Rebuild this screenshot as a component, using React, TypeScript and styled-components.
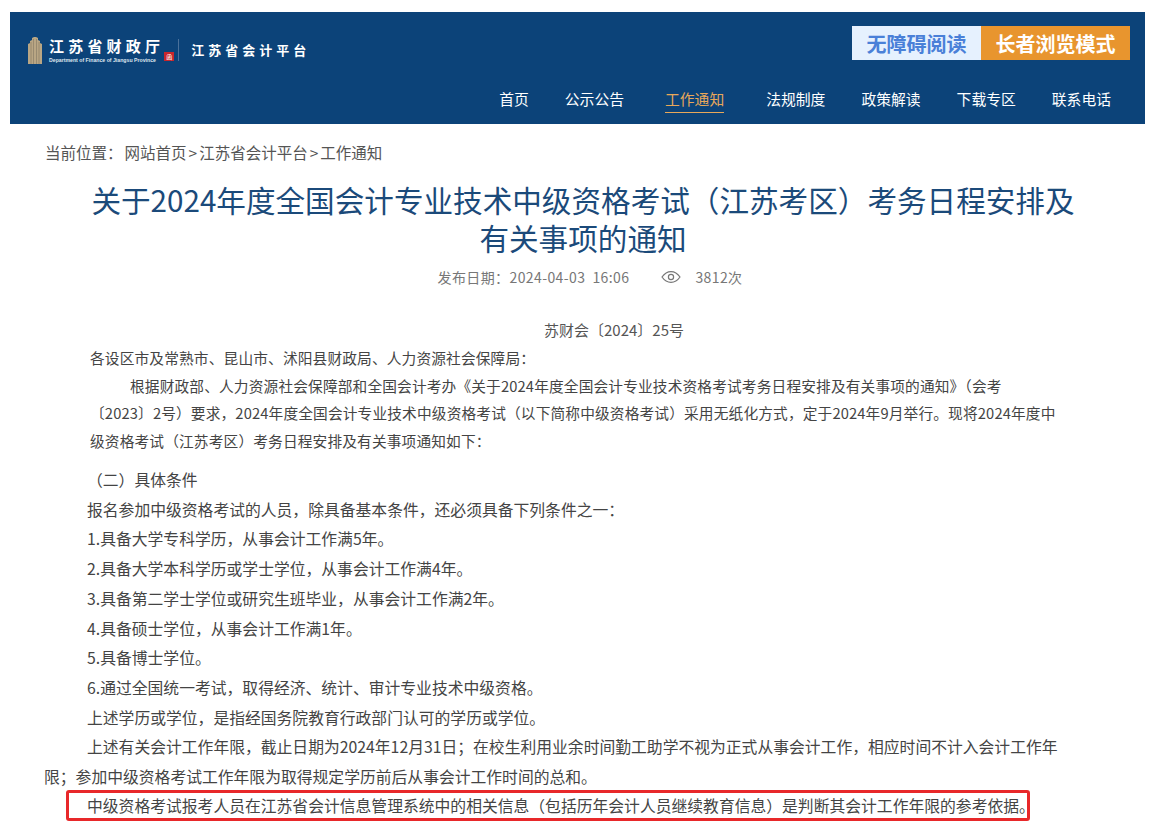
import styled, { createGlobalStyle } from "styled-components";

const GlobalStyle = createGlobalStyle`
  html, body {
    margin: 0;
    padding: 0;
    background: #fff;
  }
  body {
    font-family: "Noto Sans CJK SC", "Liberation Sans", sans-serif;
    color: #444;
    overflow: hidden;
  }
`;

const Page = styled.div`
  padding: 12px 10px 0;
`;

const Header = styled.header`
  height: 112px;
  background: #0c4379;
  display: flex;
  flex-direction: column;
  justify-content: space-between;
`;

const TopRow = styled.div`
  display: flex;
  justify-content: space-between;
  padding: 14px 15px 0 17px;
`;

const Logo = styled.div`
  display: flex;
  align-items: center;
  height: 47px;
`;

const LogoText = styled.div`
  display: flex;
  flex-direction: column;
  margin-left: 6px;
  color: #fff;
`;

const BrandName = styled.div`
  font-size: 15px;
  font-weight: 700;
  letter-spacing: 4.2px;
  line-height: 18px;
`;

const BrandEn = styled.div`
  font-family: "Liberation Sans", sans-serif;
  font-size: 5.2px;
  line-height: 6px;
  margin-top: 2px;
  font-weight: 700;
  white-space: nowrap;
  color: #dfe6ee;
`;

const Seal = styled.div`
  width: 10px;
  height: 9px;
  margin: 14px 0 0 0;
  background: #c8262c;
  color: #fff;
  font-size: 6px;
  line-height: 9px;
  text-align: center;
`;

const LogoDivider = styled.div`
  width: 1px;
  height: 22px;
  margin: 0 12px 0 4px;
  background: #4a719b;
`;

const PlatformName = styled.div`
  color: #fff;
  font-size: 13px;
  font-weight: 700;
  letter-spacing: 4px;
`;

const ModeButtons = styled.div`
  display: flex;
  height: 34px;
`;

const ModeButton = styled.a<{ $elder?: boolean }>`
  display: flex;
  align-items: center;
  justify-content: center;
  font-size: 20px;
  font-weight: 700;
  width: ${(p) => (p.$elder ? "149px" : "129px")};
  background: ${(p) => (p.$elder ? "#e8952e" : "#e6f1fe")};
  color: ${(p) => (p.$elder ? "#fff" : "#4a80d8")};
`;

const Nav = styled.nav`
  display: flex;
  justify-content: flex-end;
  gap: 36px;
  padding: 0 34px 0 0;
  height: 39px;
`;

const NavItem = styled.a<{ $active?: boolean }>`
  font-size: 14.8px;
  line-height: 27px;
  height: 27px;
  white-space: nowrap;
  color: ${(p) => (p.$active ? "#e8a85a" : "#fff")};
  margin: ${(p) => (p.$active ? "0 6px 0 5px" : "0")};
  border-bottom: ${(p) => (p.$active ? "1px solid #e8a85a" : "none")};
`;

const Main = styled.main`
  padding: 0 34px;
`;

const Crumb = styled.div`
  margin-top: 18px;
  padding-left: 1px;
  line-height: 20px;
  font-size: 15.5px;
  color: #555;
`;

const CrumbLabel = styled.span`
  margin-right: 2px;
`;

const CrumbSep = styled.span`
  margin: 0 2px;
`;

const Title = styled.h1`
  margin: 19px 0 0;
  padding: 0 30px 0 41px;
  font-size: 29.6px;
  font-weight: 400;
  line-height: 38px;
  text-align: center;
  color: #1b4a7a;
`;

const Meta = styled.div`
  display: flex;
  justify-content: center;
  align-items: center;
  margin-top: 9px;
  padding-left: 25px;
  height: 22px;
  font-size: 14px;
  letter-spacing: 0.4px;
  color: #777;
`;

const EyeIcon = styled.svg`
  width: 20px;
  height: 16px;
  margin: 0 14px 0 32px;
`;

const DocNo = styled.div`
  margin-top: 31px;
  text-align: center;
  font-size: 15px;
  line-height: 22px;
  color: #555;
  padding-left: 73px;
`;

const Notice = styled.div`
  margin-top: 3px;
  padding-left: 46px;
  padding-right: 40px;
  font-size: 14.7px;
  letter-spacing: 0.15px;
  line-height: 27.5px;
`;

const NoticeLine = styled.p<{ $indent?: boolean }>`
  margin: 0;
  text-indent: ${(p) => (p.$indent ? "40px" : "0")};
`;

const Section = styled.div`
  margin-top: 11px;
  padding-right: 44px;
  font-size: 15.8px;
  line-height: 29.7px;
`;

const Row = styled.p`
  margin: 0;
  text-indent: 43px;
`;

const Highlight = styled.p`
  margin: -2px 0 0 22px;
  width: 964px;
  height: 31px;
  box-sizing: border-box;
  border: 3px solid #e8282a;
  border-radius: 3px;
  padding-left: 18px;
  line-height: 25px;
  white-space: nowrap;
`;

export default function App() {
  return (
    <Page>
      <GlobalStyle />
      <Header>
        <TopRow>
          <Logo>
            <svg width="16" height="28" viewBox="0 0 16 28">
              <path
                d="M1 28V8l2-1v-2l2-1V2l2-1 2 0 2 1v2l2 1v2l2 1v20z"
                fill="#b9a684"
              />
              <path
                d="M4 6v22M6.500 3v25M9.500 3v25M12 6v22"
                stroke="#8f836b"
                strokeWidth="0.8"
              />
            </svg>
            <LogoText>
              <BrandName>江苏省财政厅</BrandName>
              <BrandEn>Department of Finance of Jiangsu Province</BrandEn>
            </LogoText>
            <Seal>函</Seal>
            <LogoDivider />
            <PlatformName>江苏省会计平台</PlatformName>
          </Logo>
          <ModeButtons>
            <ModeButton>无障碍阅读</ModeButton>
            <ModeButton $elder>长者浏览模式</ModeButton>
          </ModeButtons>
        </TopRow>
        <Nav>
          <NavItem>首页</NavItem>
          <NavItem>公示公告</NavItem>
          <NavItem $active>工作通知</NavItem>
          <NavItem>法规制度</NavItem>
          <NavItem>政策解读</NavItem>
          <NavItem>下载专区</NavItem>
          <NavItem>联系电话</NavItem>
        </Nav>
      </Header>
      <Main>
        <Crumb>
          <CrumbLabel>当前位置：</CrumbLabel>网站首页<CrumbSep>&gt;</CrumbSep>江苏省会计平台<CrumbSep>&gt;</CrumbSep>工作通知
        </Crumb>
        <Title>
          关于2024年度全国会计专业技术中级资格考试（江苏考区）考务日程安排及有关事项的通知
        </Title>
        <Meta>
          <span>发布日期：2024-04-03&nbsp;&nbsp;16:06</span>
          <EyeIcon viewBox="0 0 20 16" fill="none" stroke="#777" strokeWidth="1.2">
            <path d="M1 8c2.500-3.600 5.500-5.400 9-5.400s6.500 1.800 9 5.400c-2.500 3.600-5.500 5.400-9 5.400S3.500 11.600 1 8z" />
            <circle cx="10" cy="8" r="2.600" />
          </EyeIcon>
          <span>3812次</span>
        </Meta>
        <DocNo>苏财会〔2024〕25号</DocNo>
        <Notice>
          <NoticeLine>各设区市及常熟市、昆山市、沭阳县财政局、人力资源社会保障局：</NoticeLine>
          <NoticeLine $indent>
            根据财政部、人力资源社会保障部和全国会计考办《关于2024年度全国会计专业技术资格考试考务日程安排及有关事项的通知》（会考
            <br />
            〔2023〕2号）要求，2024年度全国会计专业技术中级资格考试（以下简称中级资格考试）采用无纸化方式，定于2024年9月举行。现将2024年度中
            <br />
            级资格考试（江苏考区）考务日程安排及有关事项通知如下：
          </NoticeLine>
        </Notice>
        <Section>
          <Row>（二）具体条件</Row>
          <Row>报名参加中级资格考试的人员，除具备基本条件，还必须具备下列条件之一：</Row>
          <Row>1.具备大学专科学历，从事会计工作满5年。</Row>
          <Row>2.具备大学本科学历或学士学位，从事会计工作满4年。</Row>
          <Row>3.具备第二学士学位或研究生班毕业，从事会计工作满2年。</Row>
          <Row>4.具备硕士学位，从事会计工作满1年。</Row>
          <Row>5.具备博士学位。</Row>
          <Row>6.通过全国统一考试，取得经济、统计、审计专业技术中级资格。</Row>
          <Row>上述学历或学位，是指经国务院教育行政部门认可的学历或学位。</Row>
          <Row>
            上述有关会计工作年限，截止日期为2024年12月31日；在校生利用业余时间勤工助学不视为正式从事会计工作，相应时间不计入会计工作年限；参加中级资格考试工作年限为取得规定学历前后从事会计工作时间的总和。
          </Row>
          <Highlight>
            中级资格考试报考人员在江苏省会计信息管理系统中的相关信息（包括历年会计人员继续教育信息）是判断其会计工作年限的参考依据。
          </Highlight>
        </Section>
      </Main>
    </Page>
  );
}
